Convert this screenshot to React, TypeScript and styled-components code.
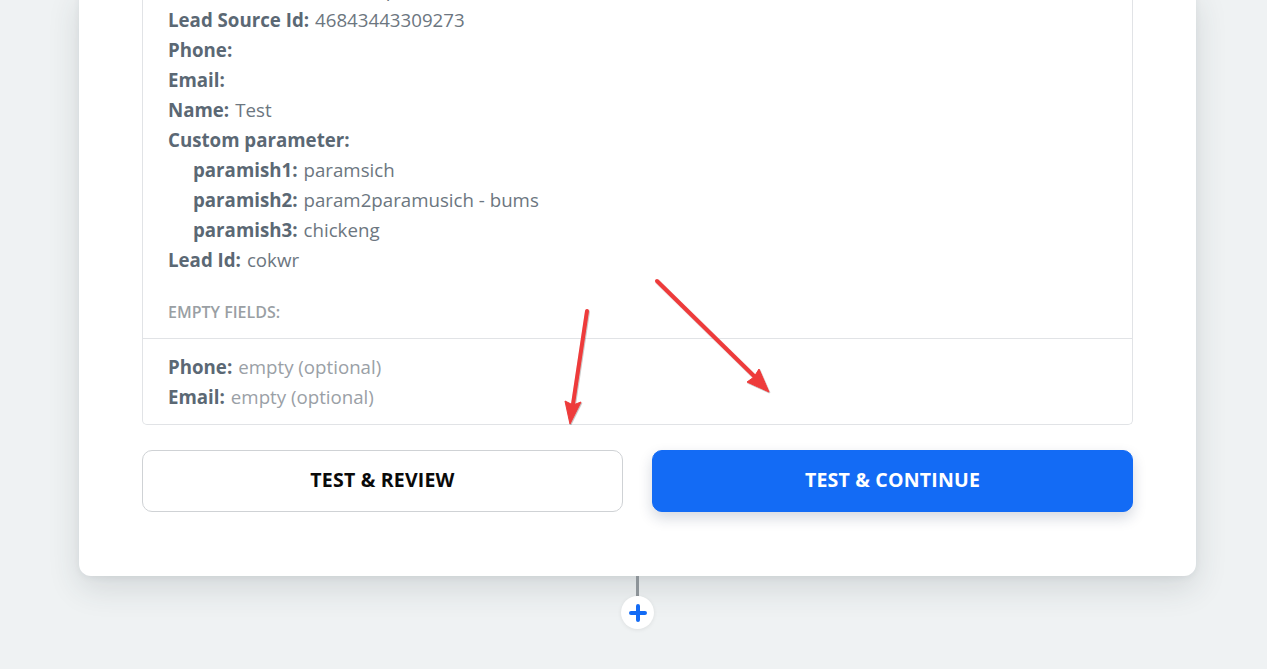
import React from 'react';
import styled, { createGlobalStyle } from 'styled-components';

const GlobalStyle = createGlobalStyle`
  html, body {
    margin: 0;
    padding: 0;
    background: #eff2f3;
    overflow: hidden;
  }
  body {
    font-family: 'Open Sans', 'Noto Sans', sans-serif;
  }
`;

interface IField {
  label: string;
  value?: string;
  nested?: boolean;
}

const fields: IField[] = [
  { label: 'Lead Source Name:', value: 'Shop' },
  { label: 'Lead Source Id:', value: '46843443309273' },
  { label: 'Phone:' },
  { label: 'Email:' },
  { label: 'Name:', value: 'Test' },
  { label: 'Custom parameter:' },
  { label: 'paramish1:', value: 'paramsich', nested: true },
  { label: 'paramish2:', value: 'param2paramusich - bums', nested: true },
  { label: 'paramish3:', value: 'chickeng', nested: true },
  { label: 'Lead Id:', value: 'cokwr' },
];

const emptyFields = ['Phone:', 'Email:'];

const Arrows = () => (
  <Overlay viewBox="0 0 1267 669">
    <defs>
      <filter id="arrowShadow" x="-10%" y="-10%" width="120%" height="120%">
        <feDropShadow dx="0.6" dy="0.8" stdDeviation="0.5" floodColor="#000" floodOpacity="0.35" />
      </filter>
    </defs>
    <g filter="url(#arrowShadow)" fill="#ee3b3b" stroke="#ee3b3b">
      <line x1="587" y1="311" x2="573" y2="404" strokeWidth="4" strokeLinecap="round" />
      <polygon points="570,424 581,402 573,405 565,401" strokeWidth="1" strokeLinejoin="round" />
      <line x1="657" y1="281" x2="754" y2="376" strokeWidth="4" strokeLinecap="round" />
      <polygon points="769,392 759,369 754,377 747,382" strokeWidth="1" strokeLinejoin="round" />
    </g>
  </Overlay>
);

export default function App() {
  return (
    <>
      <GlobalStyle />
      <Stage>
        <Card>
          <DataPanel>
            <FieldList>
              {fields.map(f => (
                <FieldRow key={f.label} $nested={f.nested}>
                  <Label>{f.label}</Label>
                  {f.value && <Value>{f.value}</Value>}
                </FieldRow>
              ))}
            </FieldList>
            <SectionTitle>Empty fields:</SectionTitle>
            <EmptyList>
              {emptyFields.map(label => (
                <FieldRow key={label}>
                  <Label>{label}</Label>
                  <Value $muted>empty (optional)</Value>
                </FieldRow>
              ))}
            </EmptyList>
          </DataPanel>
          <ButtonRow>
            <ActionButton>TEST &amp; REVIEW</ActionButton>
            <ActionButton $primary>TEST &amp; CONTINUE</ActionButton>
          </ButtonRow>
        </Card>
        <Connector />
        <AddStep aria-label="Add step">
          <svg width="18" height="18" viewBox="0 0 18 18">
            <path d="M9 2v14M2 9h14" stroke="#136bf5" strokeWidth="4" strokeLinecap="round" />
          </svg>
        </AddStep>
        <Arrows />
      </Stage>
    </>
  );
}

const Stage = styled.div`
  position: relative;
  height: 669px;
  width: 100%;
  display: flex;
  flex-direction: column;
  justify-content: flex-end;
  align-items: center;
  padding-bottom: 40px;
  box-sizing: border-box;
  overflow: hidden;
`;

const Card = styled.div`
  flex-shrink: 0;
  width: 1117px;
  box-sizing: border-box;
  margin-left: 8px;
  padding: 0 63px 64px;
  background: #fff;
  border-radius: 0 0 12px 12px;
  box-shadow: 0 12px 32px rgba(40, 55, 65, 0.14), 0 2px 6px rgba(40, 55, 65, 0.06);
`;

const DataPanel = styled.div`
  border: 1px solid #e1e3e6;
  border-top: none;
  border-radius: 0 0 5px 5px;
`;

const FieldList = styled.div`
  padding: 0 25px;
  margin-top: -16px;
`;

const FieldRow = styled.div<{ $nested?: boolean }>`
  display: flex;
  gap: 6px;
  height: 30px;
  align-items: center;
  font-size: 18.7px;
  white-space: nowrap;
  padding-left: ${p => (p.$nested ? '25px' : '0')};
`;

const Label = styled.span`
  font-weight: 700;
  color: #5b6874;
`;

const Value = styled.span<{ $muted?: boolean }>`
  font-weight: 400;
  color: ${p => (p.$muted ? '#9aa0a6' : '#6c7680')};
`;

const SectionTitle = styled.div`
  margin-top: 28px;
  padding: 0 25px 16px;
  line-height: 20px;
  font-size: 16px;
  font-weight: 600;
  text-transform: uppercase;
  color: #9a9fa4;
  border-bottom: 1px solid #e1e3e6;
`;

const EmptyList = styled.div`
  padding: 12px 25px 13px;
`;

const ButtonRow = styled.div`
  display: grid;
  grid-template-columns: 1fr 1fr;
  gap: 29px;
  margin-top: 25px;
`;

const ActionButton = styled.button<{ $primary?: boolean }>`
  height: 62px;
  padding: 0 0 4px;
  border-radius: 10px;
  font-family: 'Open Sans', 'Noto Sans', sans-serif;
  font-size: 19.5px;
  font-weight: 700;
  letter-spacing: 0.2px;
  cursor: pointer;
  border: 1px solid ${p => (p.$primary ? '#136bf5' : '#cfd2d5')};
  background: ${p => (p.$primary ? '#136bf5' : '#fff')};
  color: ${p => (p.$primary ? '#fff' : '#0a0a0a')};
  box-shadow: ${p => (p.$primary ? '0 6px 14px rgba(20, 40, 80, 0.18)' : 'none')};
`;

const Connector = styled.div`
  width: 3px;
  height: 20px;
  background: #8d9499;
  margin-left: 8px;
  flex-shrink: 0;
`;

const AddStep = styled.button`
  flex-shrink: 0;
  width: 33px;
  height: 33px;
  margin-left: 8px;
  border-radius: 50%;
  border: none;
  padding: 0;
  background: #fff;
  display: flex;
  align-items: center;
  justify-content: center;
  box-shadow: 0 1px 4px rgba(0, 0, 0, 0.08);
  cursor: pointer;
`;

const Overlay = styled.svg`
  position: absolute;
  top: 0;
  left: 0;
  width: 1267px;
  height: 669px;
  pointer-events: none;
`;
